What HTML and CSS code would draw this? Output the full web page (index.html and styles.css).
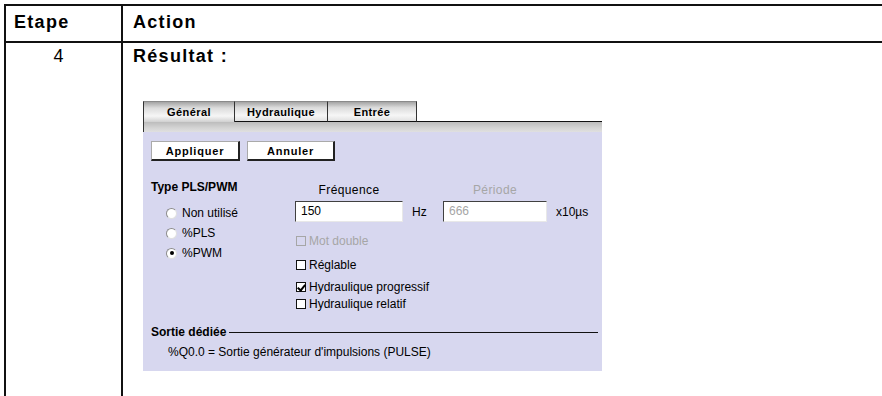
FILE: index.html
```html
<!DOCTYPE html>
<html lang="fr">
<head>
  <meta charset="UTF-8">
  <title>Etape 4 - Résultat</title>
  <link rel="stylesheet" href="styles.css">
</head>
<body>
  <table class="steps">
    <tr>
      <th class="step-col">Etape</th>
      <th>Action</th>
    </tr>
    <tr>
      <td class="step-col step-num">4</td>
      <td class="action-cell">
        <div class="result">Résultat :</div>

        <div class="panel">
          <div class="tabs">
            <div class="tab active">Général</div>
            <div class="tab">Hydraulique</div>
            <div class="tab">Entrée</div>
            <div class="tab-rest"></div>
          </div>
          <div class="tab-bar"></div>

          <div class="panel-body">
            <div class="actions">
              <button class="btn btn-apply">Appliquer</button>
              <button class="btn btn-cancel">Annuler</button>
            </div>

            <div class="settings">
              <div class="type-col">
                <div class="group-title">Type PLS/PWM</div>
                <ul class="radios">
                  <li><span class="radio"></span>Non utilisé</li>
                  <li><span class="radio"></span>%PLS</li>
                  <li><span class="radio on"></span>%PWM</li>
                </ul>
              </div>

              <div class="freq-col">
                <div class="field-label freq-label">Fréquence</div>
                <div class="field">
                  <div class="input freq-input">150</div>
                  <span class="unit">Hz</span>
                </div>
                <div class="check disabled row-double"><span class="box"></span>Mot double</div>
                <div class="check row-adjust"><span class="box"></span>Réglable</div>
                <div class="check row-prog"><span class="box checked"></span>Hydraulique progressif</div>
                <div class="check row-rel"><span class="box"></span>Hydraulique relatif</div>
              </div>

              <div class="period-col">
                <div class="field-label period-label disabled">Période</div>
                <div class="field">
                  <div class="input period-input disabled">666</div>
                  <span class="unit">x10µs</span>
                </div>
              </div>
            </div>

            <div class="section-title"><span>Sortie dédiée</span></div>
            <div class="output-line">%Q0.0 = Sortie générateur d'impulsions (PULSE)</div>
          </div>
        </div>
      </td>
    </tr>
  </table>
</body>
</html>
```

FILE: styles.css
```css
html { overflow: hidden; }
body { margin: 0; background: #fff; color: #000; font-family: "Liberation Sans", Arial, sans-serif; }

/* outer step table */
.steps { margin: 4px 0 0 4px; width: 900px; border-spacing: 0; border-left: 2px solid #111; border-top: 2px solid #111; }
.steps th, .steps td { border-right: 2px solid #111; border-bottom: 2px solid #111; vertical-align: top; text-align: left; padding: 0; box-sizing: border-box; }
.steps th { height: 37px; padding: 6px 0 0 10px; font-size: 18px; letter-spacing: 1.3px; line-height: 20px; }
.steps th.step-col { padding-left: 8px; }
.step-col { width: 117px; }
.step-num { text-align: center !important; padding: 3px 10px 0 0 !important; font-size: 18px; line-height: 20px; }
.action-cell { height: 380px; padding: 3px 0 0 10px !important; }
.result { font-size: 18px; font-weight: bold; letter-spacing: 1.3px; line-height: 20px; }

/* config panel */
.panel { width: 459px; margin: 35px 0 0 10px; font-size: 12px; }
.tabs { display: flex; height: 21px; }
.tab { box-sizing: border-box; height: 21px; line-height: 20px; text-align: center; font-size: 11px; font-weight: bold; letter-spacing: 0.4px;
  background: linear-gradient(#a4a4a4, #dcdcdc 30%, #f6f6f6 70%, #e2e2e2);
  border-top: 1px solid #8a8a8a; border-right: 1px solid #333; border-bottom: 1px solid #111; }
.tab.active { width: 92px; border-left: 1px solid #333; border-bottom: none; background: linear-gradient(#a4a4a4, #dcdcdc 30%, #f6f6f6 70%, #d0d0d0); }
.tab:nth-child(2) { width: 93px; }
.tab:nth-child(3) { width: 89px; }
.tab-rest { flex: 1; border-bottom: 1px solid #111; }
.tab-bar { height: 10px; border-left: 1px solid #333; background: linear-gradient(#bcbcbc, #d4d4d4 60%, #e0e0e0); }

.panel-body { background: #d7d7ef; padding: 9px 4px 11px 8px; }
.actions { display: flex; gap: 7px; }
.btn { box-sizing: border-box; height: 20px; padding: 0; background: #fff; font-family: inherit; font-size: 11px; font-weight: bold; letter-spacing: 0.8px;
  border: 1px solid #aaa; border-right: 2px solid #222; border-bottom: 2px solid #222; }
.btn-apply { width: 89px; }
.btn-cancel { width: 88px; }

.settings { display: flex; margin-top: 18px; }
.type-col { width: 144px; }
.group-title { font-weight: bold; line-height: 16px; }
.radios { list-style: none; margin: 8px 0 0; padding: 0; }
.radios li { display: flex; align-items: center; height: 20px; }
.radio { position: relative; box-sizing: border-box; width: 11px; height: 11px; margin: 0 5px 0 15px; border-radius: 50%; background: #fff;
  border: 1px solid #8c8c8c; border-right-color: #e0e0e0; border-bottom-color: #e0e0e0; }
.radio.on::after { content: ""; position: absolute; left: 2.5px; top: 2.5px; width: 4px; height: 4px; border-radius: 50%; background: #000; }

.freq-col { width: 148px; }
.field-label { line-height: 16px; margin-top: 3px; text-align: center; letter-spacing: 0.4px; }
.freq-label { width: 108px; }
.period-label { width: 104px; }
.field { display: flex; align-items: center; gap: 9px; margin-top: 3px; }
.input { box-sizing: border-box; height: 21px; line-height: 19px; padding-left: 5px; background: #fff;
  border: 1px solid #e8e8e8; border-top: 1px solid #404040; border-left: 1px solid #404040; }
.freq-input { width: 108px; }
.period-input { width: 104px; }
.disabled { color: #a6a6a6; }

.check { display: flex; align-items: center; height: 16px; line-height: 16px; }
.box { position: relative; box-sizing: border-box; width: 10px; height: 10px; margin: 0 3px 0 1px; background: #fff; border: 1px solid #111; }
.check.disabled .box { border-color: #a6a6a6; background: transparent; }
.box.checked::after { content: ""; position: absolute; left: 2px; top: 0; width: 3px; height: 6px; border: solid #000; border-width: 0 2px 2px 0; transform: rotate(40deg); }
.row-double { margin-top: 11px; }
.row-adjust { margin-top: 8px; }
.row-prog { margin-top: 6px; }
.row-rel { margin-top: 1px; }

.section-title { display: flex; align-items: center; margin-top: 12px; line-height: 16px; font-weight: bold; }
.section-title::after { content: ""; flex: 1; margin-left: 3px; border-top: 1px solid #111; }
.output-line { margin: 4px 0 0 17px; line-height: 16px; }
```
